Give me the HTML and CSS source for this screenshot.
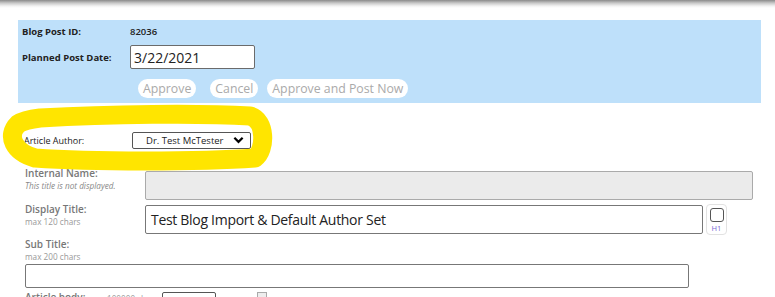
FILE: index.html
```html
<!DOCTYPE html>
<html>
<head>
<meta charset="utf-8">
<link rel="stylesheet" href="styles.css">
</head>
<body>
<div class="topbar"></div>
<div class="page">
  <section class="panel">
    <div class="prow">
      <span class="plabel">Blog Post ID:</span>
      <span class="pvalue">82036</span>
    </div>
    <div class="prow date-row">
      <span class="plabel">Planned Post Date:</span>
      <input class="date-input" type="text" value="3/22/2021">
    </div>
    <div class="btns">
      <button class="pill">Approve</button>
      <button class="pill">Cancel</button>
      <button class="pill">Approve and Post Now</button>
    </div>
  </section>

  <div class="author-row">
    <span class="author-label">Article Author:</span>
    <div class="select author-select"><span>Dr. Test McTester</span><svg class="chev" viewBox="0 0 12 8" width="11" height="8"><path d="M1.5 1.5 L6 6 L10.5 1.5" fill="none" stroke="#000" stroke-width="2.4"/></svg></div>
  </div>

  <div class="frow internal">
    <div class="flabel"><b>Internal Name:</b><i>This title is not displayed.</i></div>
    <div class="field gray"></div>
  </div>
  <div class="frow display">
    <div class="flabel"><b>Display Title:</b><small>max 120 chars</small></div>
    <div class="field title-field">Test Blog Import &amp; Default Author Set</div>
    <div class="h1box"><span class="cb"></span><span class="h1">H1</span></div>
  </div>
  <div class="sub">
    <div class="flabel"><b>Sub Title:</b><small>max 200 chars</small></div>
    <div class="field sub-field"></div>
  </div>
  <div class="body-row">
    <b>Article body:</b><small>max 100000 chars</small>
    <div class="select body-select"><span>Bo d</span><svg viewBox="0 0 12 8" width="10" height="7"><path d="M1.5 1.5 L6 6 L10.5 1.5" fill="none" stroke="#000" stroke-width="2.4"/></svg></div>
    <span class="arrows">▲ ▼</span>
    <span class="smallcb"></span>
  </div>

  <svg class="highlight" viewBox="0 0 280 80" width="280" height="80"><path d="M40 18 C 110 14, 200 13, 250 16 C 266 20, 266 50, 255 58 C 200 62, 90 62, 35 58 C 14 52, 6 36, 18 24 C 24 20, 32 19, 40 18 Z" fill="none" stroke="#ffe500" stroke-width="19" stroke-linejoin="round"/></svg>
</div>
</body>
</html>
```
FILE: styles.css
```css
* { box-sizing: border-box; }
html, body { margin: 0; padding: 0; background: #fff; }
body { font-family: "Open Sans", "Noto Sans", sans-serif; color: #333; width: 775px; height: 297px; overflow: hidden; }
.topbar { height: 8px; background: linear-gradient(#8a8a8a 0, #c8c8c8 3px, #f2f2f2 6px, #fff 8px); }
.page { padding: 12px 0 0 18px; position: relative; }
.panel { width: 743px; height: 83px; background: #bee0fa; padding: 4px 0 0 4px; }
.prow { display: flex; align-items: center; height: 14px; }
.plabel { width: 108px; font-size: 9.5px; font-weight: 700; color: #222; }
.pvalue { font-size: 9.5px; font-weight: 600; color: #222; }
.date-row { height: 24px; margin-top: 7px; }
.date-input { width: 125px; height: 24px; border: 1px solid #6b6b6b; border-radius: 2px; font: 14px "Open Sans", sans-serif; color: #222; padding: 0 3px; background: #fff; }
.btns { display: flex; gap: 9px; margin: 10px 0 0 116px; }
.pill { font: 12.3px "Open Sans", sans-serif; color: #aaa; background: #fff; border: none; border-radius: 10px; height: 19px; padding: 0 5px; line-height: 19px; }
.btns .pill:nth-child(2) { margin-left: 5px; }
.author-row { display: flex; align-items: center; height: 36px; margin-top: 19px; padding-left: 6px; }
.author-label { width: 108px; font-size: 9px; color: #222; }
.select { display: flex; align-items: center; justify-content: space-between; border: 1px solid #555; border-radius: 2px; background: #fff; font-size: 9.5px; color: #222; }
.author-select { width: 119px; height: 17px; padding: 0 6px 0 13px; }
.highlight { position: absolute; left: 0; top: 92px; pointer-events: none; }
.frow { display: flex; align-items: flex-start; }
.flabel { width: 127px; padding-left: 7px; display: flex; flex-direction: column; }
.flabel b { font-size: 10px; font-weight: 600; color: #777; line-height: 12px; }
.flabel i { font-size: 8.2px; color: #888; line-height: 14px; }
.flabel small { font-size: 8.2px; color: #999; line-height: 14px; }
.internal { margin-top: 13px; }
.internal .flabel { margin-top: -4px; }
.field { border: 1px solid #777; border-radius: 2px; background: #fff; }
.gray { width: 608px; height: 29px; background: #ebebeb; border-color: #aaa; }
.display { margin-top: 5px; }
.display .flabel { margin-top: -2px; }
.title-field { width: 558px; height: 29px; font-size: 14px; color: #222; padding: 4px 0 0 5px; letter-spacing: -0.3px; }
.h1box { width: 21px; height: 31px; margin-left: 3px; margin-top: -1px; border: 1px solid #e2e2e2; border-radius: 4px; display: flex; flex-direction: column; align-items: center; padding-top: 3px; }
.cb { width: 14px; height: 14px; border: 1px solid #555; border-radius: 3px; }
.h1 { font-size: 7.5px; color: #7a6ad6; margin-top: 1px; }
.sub { margin-top: 3px; }
.sub-field { width: 664px; height: 24px; margin: 0 0 0 7px; }
.body-row { display: flex; align-items: flex-start; padding-left: 7px; margin-top: 4px; height: 18px; }
.body-row b { font-size: 10px; font-weight: 600; color: #777; line-height: 13px; margin-top: -1px; }
.body-row small { font-size: 8.2px; color: #999; margin-left: 3px; width: 74px; line-height: 13px; }
.body-select { width: 54px; height: 16px; padding: 0 4px; margin-left: 0; }
.arrows { font-size: 10px; margin-left: 10px; color: #222; }
.smallcb { width: 10px; height: 12px; border: 1px solid #aaa; margin-left: 8px; background: #eee; }
```
